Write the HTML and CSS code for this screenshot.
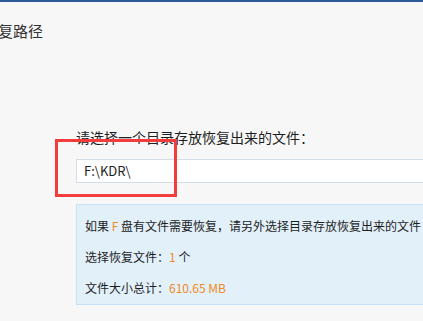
FILE: index.html
```html
<!DOCTYPE html>
<html lang="zh-CN">
<head>
<meta charset="utf-8">
<link rel="stylesheet" href="styles.css">
</head>
<body>
<div class="topbar"></div>
<h1 class="title">恢复路径</h1>
<div class="content">
  <div class="label">请选择一个目录存放恢复出来的文件：</div>
  <div class="input">F:\KDR\</div>
  <div class="info">
    <p class="line">如果 <span class="hl">F</span> 盘有文件需要恢复，请另外选择目录存放恢复出来的文件</p>
    <p class="line">选择恢复文件：<span class="hl">1</span> 个</p>
    <p class="line">文件大小总计：<span class="hl">610.65 MB</span></p>
  </div>
</div>
<div class="highlight-box"></div>
</body>
</html>
```

FILE: styles.css
```css
html, body {
  margin: 0;
  padding: 0;
}
body {
  width: 423px;
  height: 321px;
  overflow: hidden;
  background: #f7f7f7;
  font-family: "Noto Sans CJK SC", "Microsoft YaHei", sans-serif;
  color: #333;
  position: relative;
}
.topbar {
  height: 2px;
  background: #2b5b98;
}
.title {
  margin: 19px 0 0 -17px;
  font-size: 15px;
  font-weight: normal;
  line-height: 20px;
  color: #333;
  white-space: nowrap;
}
.content {
  margin-left: 76px;
  padding-top: 86px;
}
.label {
  font-size: 14px;
  line-height: 20px;
  color: #1e1e1e;
  white-space: nowrap;
}
.input {
  margin-top: 12px;
  width: 420px;
  height: 22px;
  box-sizing: content-box;
  border: 1px solid #d5dde8;
  background: #fff;
  padding-left: 7px;
  font-size: 13px;
  line-height: 22px;
  color: #1e1e1e;
}
.info {
  margin-top: 21px;
  width: 420px;
  border: 1px solid #c8e0f4;
  background: #e2f0fa;
  padding: 5px 0 1px 8px;
}
.line {
  margin: 0;
  font-size: 12px;
  line-height: 31px;
  color: #1e1e1e;
  white-space: nowrap;
}
.hl {
  color: #f08a1c;
}
.highlight-box {
  position: absolute;
  left: 55px;
  top: 139px;
  width: 116px;
  height: 52px;
  border: 3px solid #f33d3d;
}
```
